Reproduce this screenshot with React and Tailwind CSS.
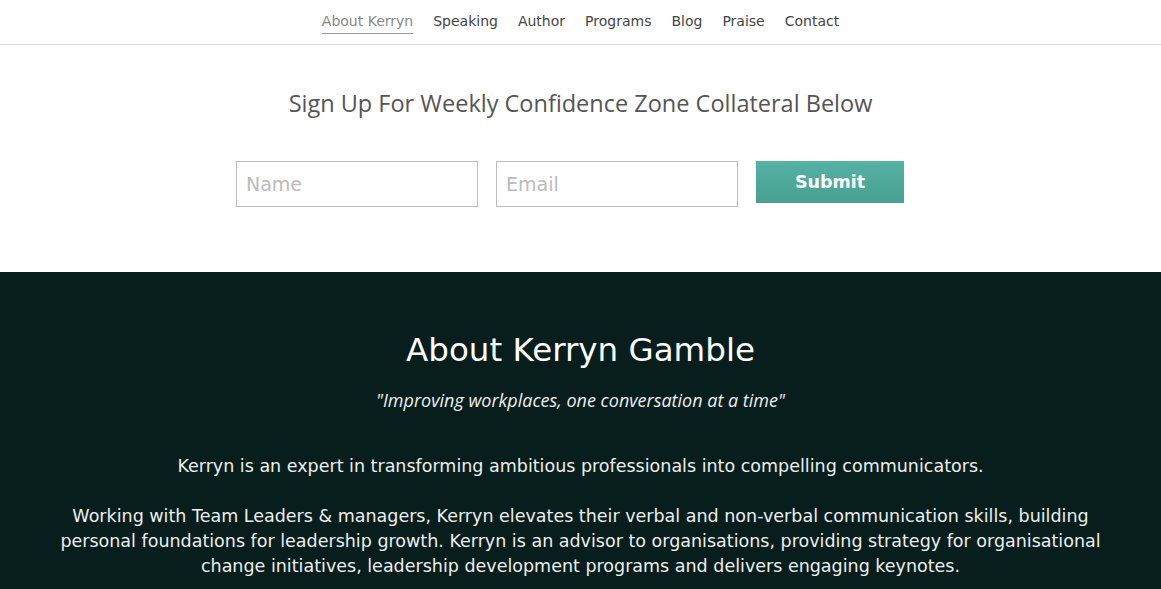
const mont = "font-['DejaVu_Sans','Liberation_Sans',sans-serif]";

export default function App() {
  const links = ["About Kerryn", "Speaking", "Author", "Programs", "Blog", "Praise", "Contact"];

  return (
    <div className="min-h-screen bg-white">
      {/* nav */}
      <nav className={`h-[45px] border-b border-[#dcdcdc] flex justify-center items-start pt-[11px] gap-[20px] text-[14px] ${mont}`}>
        {links.map((l, i) => (
          <a
            key={l}
            href="#"
            className={
              i === 0
                ? "text-[#888] pb-[2px] border-b border-[#999] leading-[20px]"
                : "text-[#444] leading-[20px]"
            }
          >
            {l}
          </a>
        ))}
      </nav>

      {/* sign up */}
      <section className="h-[227px] pt-[42px]">
        <h2 className="text-center text-[23.5px] leading-[32px] text-[#555] font-['Open_Sans',sans-serif]">
          Sign Up For Weekly Confidence Zone Collateral Below
        </h2>
        <form className="mt-[42px] flex justify-center items-start gap-[18px] pr-[21px]" onSubmit={(e) => e.preventDefault()}>
          <input
            placeholder="Name"
            className={`w-[242px] h-[46px] border border-[#bdbdbd] px-[9px] text-[19px] text-[#333] placeholder:text-[#bbb] outline-none ${mont}`}
          />
          <input
            placeholder="Email"
            className={`w-[242px] h-[46px] border border-[#bdbdbd] px-[9px] text-[19px] text-[#333] placeholder:text-[#bbb] outline-none ${mont}`}
          />
          <button
            type="submit"
            className={`w-[148px] h-[42px] bg-gradient-to-b from-[#55b2a5] to-[#47a091] text-white font-bold text-[17.5px] ${mont}`}
          >
            Submit
          </button>
        </form>
      </section>

      {/* about */}
      <section className="bg-[#081e1d] text-white pt-[57px] pb-[20px] px-[40px]">
        <h1 className={`text-center text-[32.5px] leading-[42px] ${mont}`}>About Kerryn Gamble</h1>
        <p className="mt-[15px] text-center italic text-[18px] leading-[28px] text-[#eee] font-['Open_Sans',sans-serif]">
          "Improving workplaces, one conversation at a time"
        </p>
        <div className={`mt-[40px] mx-auto max-w-[1065px] text-center text-[17.5px] leading-[25px] text-[#eee] ${mont}`}>
          <p>Kerryn is an expert in transforming ambitious professionals into compelling communicators.</p>
          <p className="mt-[25px]">
            Working with Team Leaders &amp; managers, Kerryn elevates their verbal and non-verbal communication skills, building personal foundations for leadership growth. Kerryn is an advisor to organisations, providing strategy for organisational change initiatives, leadership development programs and delivers engaging keynotes.
          </p>
        </div>
      </section>
    </div>
  );
}
